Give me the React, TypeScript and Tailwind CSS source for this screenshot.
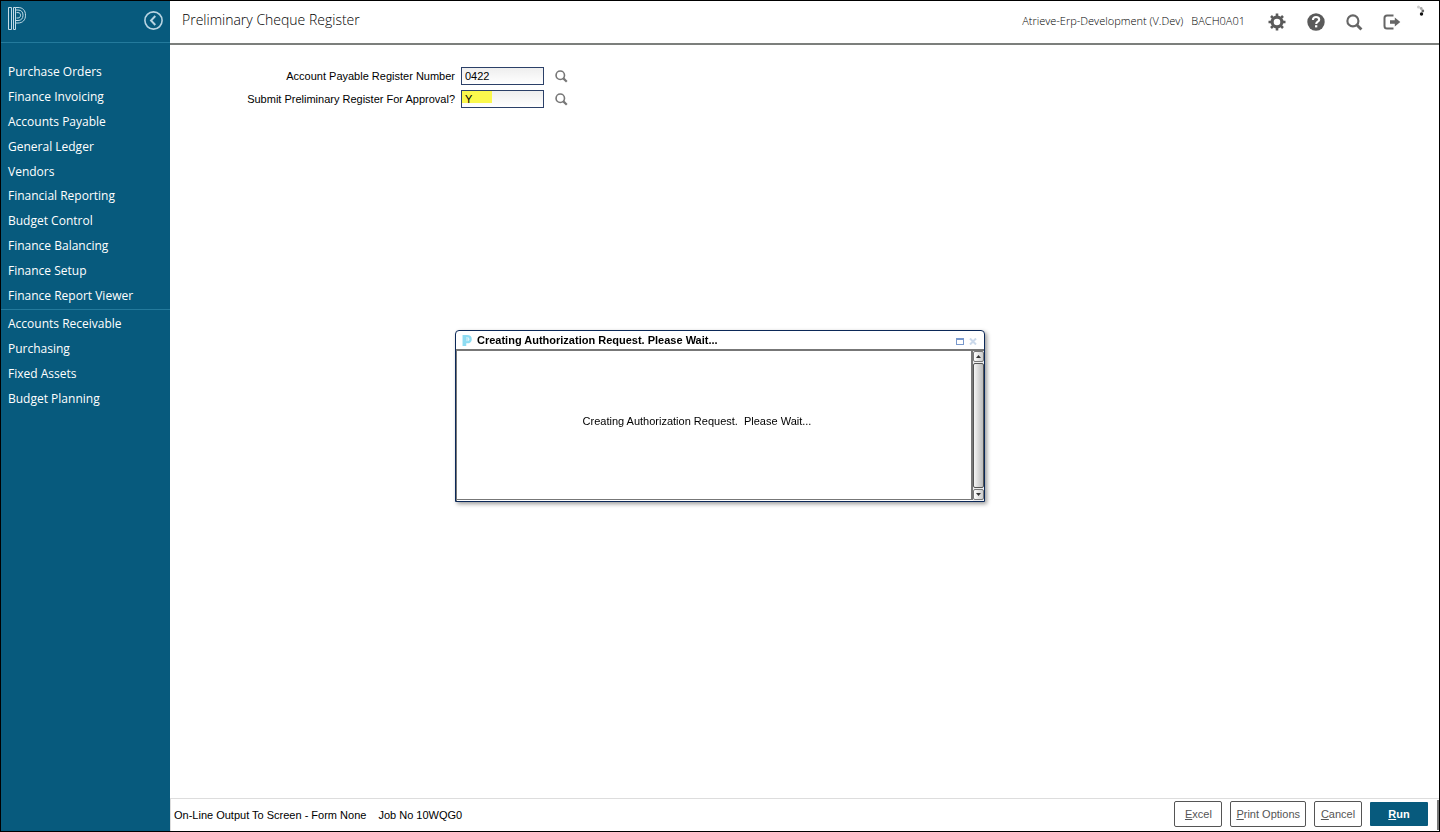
import React from "react";

const mainMenu = [
  "Purchase Orders",
  "Finance Invoicing",
  "Accounts Payable",
  "General Ledger",
  "Vendors",
  "Financial Reporting",
  "Budget Control",
  "Finance Balancing",
  "Finance Setup",
  "Finance Report Viewer",
];

const otherMenu = ["Accounts Receivable", "Purchasing", "Fixed Assets", "Budget Planning"];

function Logo() {
  return (
    <svg width="19" height="24" viewBox="0 0 19 24" fill="none" stroke="#c3dbe6" strokeWidth="1">
      <path d="M.5 .5H3.500V22.500H.5Z" />
      <path d="M5.500 .5H7.500V22.500H5.500Z" />
      <path d="M7.500 .5H10C14.800 .5 17.500 3.500 17.500 8.200S14.800 16 10 16H7.500" />
      <path d="M8 3H10C13.300 3 15 5 15 8.200S13.300 13.500 10 13.500H8" />
      <path d="M8.500 5.600H10C11.700 5.600 12.500 6.700 12.500 8.200S11.700 11 10 11H8.500" />
    </svg>
  );
}

function CollapseIcon() {
  return (
    <svg width="20" height="20" viewBox="0 0 20 20" fill="none" stroke="#b8d4e2" strokeWidth="1.600">
      <circle cx="10.500" cy="10.500" r="8.600" />
      <path d="M12.300 6L8 10.500L12.300 15" strokeWidth="1.900" />
    </svg>
  );
}

function GearIcon() {
  return (
    <svg width="18" height="18" viewBox="0 0 18 18" fill="none" stroke="#5a5a5a">
      <circle cx="9" cy="9" r="4.900" strokeWidth="3.200" />
      <path
        d="M9 .5V3M9 15V17.500M.5 9H3M15 9H17.500M3 3L4.900 4.900M13.100 13.100L15 15M15 3L13.100 4.900M4.900 13.100L3 15"
        strokeWidth="2.600"
      />
    </svg>
  );
}

function HelpIcon() {
  return (
    <svg width="18" height="18" viewBox="0 0 18 18" fill="none">
      <circle cx="9" cy="9" r="8.700" fill="#5a5a5a" />
      <path d="M5.900 7C5.900 5 7.200 4 9 4S12.200 5 12.200 6.700C12.200 8.700 9.200 8.700 9.200 10.900" stroke="#fff" strokeWidth="2.100" />
      <path d="M8 12.200H10.300V14.400H8Z" fill="#fff" />
    </svg>
  );
}

function SearchIcon({ className, color }: { className: string; color: string }) {
  return (
    <svg className={className} viewBox="0 0 16 16" fill="none" stroke={color}>
      <circle cx="6.500" cy="6.500" r="5.200" strokeWidth="2" />
      <path d="M10.300 10.300L14.500 14.500" strokeWidth="2.700" />
    </svg>
  );
}

function LogoutIcon() {
  return (
    <svg width="18" height="16" viewBox="0 0 18 16" fill="none">
      <path d="M10.500 1.500H4Q1.500 1.500 1.500 4V12Q1.500 14.500 4 14.500H10.500" stroke="#666" strokeWidth="2" />
      <path d="M7 6.300H11.800V3.600L17.300 8L11.800 12.400V9.700H7Z" fill="#666" />
    </svg>
  );
}

function Spinner() {
  return (
    <svg width="10" height="12" viewBox="0 0 10 12">
      <circle cx="2.500" cy="2" r="1.500" fill="#ccc" />
      <circle cx="5.200" cy="3.500" r="1.400" fill="#aaa" />
      <circle cx="6.800" cy="6" r="1.400" fill="#666" />
      <circle cx="5.500" cy="9" r="1.700" fill="#111" />
    </svg>
  );
}

function MenuGroup({ items, className }: { items: string[]; className: string }) {
  return (
    <ul className={className}>
      {items.map((item) => (
        <li key={item} className="flex items-center px-2">
          <a href="#" className="whitespace-nowrap">
            {item}
          </a>
        </li>
      ))}
    </ul>
  );
}

function Field({ id, label, value, highlighted }: { id: string; label: string; value: string; highlighted?: boolean }) {
  return (
    <div className="flex items-center">
      <label htmlFor={id} className="w-[286px] pr-[6px] text-right">
        {label}
      </label>
      <input
        id={id}
        defaultValue={value}
        className={
          highlighted
            ? "h-[18px] w-[83px] border border-[#2b4068] bg-[linear-gradient(#fbf84d,#fbf84d),linear-gradient(#eee,#fff)] bg-[length:30px_12px,100%_100%] bg-no-repeat px-[3px]"
            : "h-[18px] w-[83px] border border-[#2b4068] bg-linear-to-b from-[#eee] to-white px-[3px]"
        }
      />
      <button type="button" aria-label={"Look up " + label} className="ml-[11px]">
        <SearchIcon className="size-[13px]" color="#777" />
      </button>
    </div>
  );
}

function FooterButton({ label }: { label: string }) {
  return (
    <button type="button" className="h-[26px] min-w-[48px] rounded-[2px] border border-[#555] bg-white px-[5px] text-[#555]">
      <span className="underline">{label[0]}</span>
      {label.slice(1)}
    </button>
  );
}

function ScrollButton({ up }: { up?: boolean }) {
  return (
    <button
      type="button"
      aria-label={up ? "Scroll up" : "Scroll down"}
      className="flex h-[11px] w-full items-center justify-center rounded-[2px] border border-[#777] bg-linear-to-r from-white to-[#ccc]"
    >
      <svg width="5" height="3" viewBox="0 0 5 3" fill="#333">
        <path d={up ? "M0 3L2.500 0L5 3Z" : "M0 0H5L2.500 3Z"} />
      </svg>
    </button>
  );
}

function WaitDialog() {
  return (
    <section
      role="dialog"
      aria-labelledby="wait-title"
      className="flex h-[172px] w-[530px] flex-col rounded-t-[4px] border border-[#0b2858] bg-white shadow-[2px_2px_4px_rgba(0,0,0,0.4)]"
    >
      <header className="flex h-[18px] items-center pr-[7px] pl-[6px]">
        <svg width="10" height="11" viewBox="0 0 10 11" fill="none" stroke="#8edcf2">
          <path d="M1.500 0V11M3.300 0V11" strokeWidth="1.900" />
          <path d="M3 1.200H5Q8.600 1.200 8.600 4.200T5 7.200H4" strokeWidth="2.300" />
          <path d="M4 4.200H6.500" stroke="#b9e8f6" strokeWidth="4" />
        </svg>
        <h2 id="wait-title" className="ml-[5px] flex-1 font-bold">
          Creating Authorization Request. Please Wait...
        </h2>
        <button type="button" aria-label="Maximize" className="mt-[3px] h-[7px] w-[8px] border border-t-2 border-[#7898cc]" />
        <button type="button" aria-label="Close" className="mt-[3px] ml-[5px]">
          <svg width="8" height="7" viewBox="0 0 8 7" stroke="#cbd9eb" strokeWidth="2">
            <path d="M1 .5L7 6.500M7 .5L1 6.500" />
          </svg>
        </button>
      </header>
      <div className="flex flex-1 border-t-2 border-l border-[#777]">
        <div className="mb-px flex flex-1 justify-center border-r-2 border-b border-[#777] pr-[34px] pt-[63px] whitespace-pre">
          {"Creating Authorization Request.  Please Wait..."}
        </div>
        <div className="flex w-[11px] flex-col gap-px bg-[#eee] pb-px">
          <ScrollButton up />
          <div className="flex-1 rounded-[2px] border border-[#555] bg-linear-to-r from-[#f5f5f5] to-[#bbb]" />
          <ScrollButton />
        </div>
      </div>
    </section>
  );
}

export default function App() {
  return (
    <div className="flex min-h-screen border border-black bg-white font-['Liberation_Sans',Arial,sans-serif] text-[11px] leading-[14px] text-black">
      <aside className="w-[169px] shrink-0 bg-[#075a7d] font-['Open_Sans',sans-serif] text-[12px] leading-[20px] text-white">
        <div className="flex h-[42px] items-start justify-between border-b border-[#247a9c] pt-[6px] pr-[7px] pl-[7px]">
          <Logo />
          <button type="button" aria-label="Collapse menu" className="mt-[3px]">
            <CollapseIcon />
          </button>
        </div>
        <nav aria-label="Modules" className="pt-[17px]">
          <MenuGroup items={mainMenu} className="-ml-px grid h-[248px] auto-rows-fr" />
          <hr className="mt-px mb-[2px] border-[#247a9c]" />
          <MenuGroup items={otherMenu} className="-ml-px grid h-[99px] auto-rows-fr" />
        </nav>
      </aside>
      <div className="flex min-w-0 flex-1 flex-col">
        <header className="flex h-[44px] items-center border-b-2 border-[#7c7f7c] pr-[13px] pl-[12px] font-['Open_Sans',sans-serif]">
          <h1 className="mb-[4px] flex-1 text-[14px] leading-[20px] font-light text-black">Preliminary Cheque Register</h1>
          <span className="mb-[2px] font-light">Atrieve-Erp-Development (V.Dev)</span>
          <span className="mb-[2px] ml-[8px] font-light">BACH0A01</span>
          <button type="button" aria-label="Settings" className="ml-[23px]">
            <GearIcon />
          </button>
          <button type="button" aria-label="Help" className="ml-[21px]">
            <HelpIcon />
          </button>
          <button type="button" aria-label="Search" className="ml-[21px]">
            <SearchIcon className="size-[17px]" color="#666" />
          </button>
          <button type="button" aria-label="Sign out" className="ml-[20px]">
            <LogoutIcon />
          </button>
          <span className="mb-[22px] ml-[15px]">
            <Spinner />
          </span>
        </header>
        <main className="flex-1 pt-[22px] pl-[5px]">
          <form className="flex flex-col gap-[5px]">
            <Field id="register" label="Account Payable Register Number" value="0422" />
            <Field id="approval" label="Submit Preliminary Register For Approval?" value="Y" highlighted />
          </form>
        </main>
        <footer className="flex h-[33px] items-center border-t border-l border-[#ddd] pl-[3px]">
          <p className="flex flex-1 gap-[12px]">
            <span>On-Line Output To Screen - Form None</span>
            <span>Job No 10WQG0</span>
          </p>
          <div className="flex items-center gap-[8px] pr-[9px] pb-[2px]">
            <FooterButton label="Excel" />
            <FooterButton label="Print Options" />
            <FooterButton label="Cancel" />
            <button type="button" className="h-[24px] w-[58px] rounded-[1px] bg-[#075a7d] font-bold text-white">
              <span className="underline">R</span>un
            </button>
          </div>
          <div className="h-[30px] w-[2px] bg-[#777]" />
        </footer>
      </div>
      <div className="pointer-events-none fixed inset-0 flex items-center justify-center">
        <WaitDialog />
      </div>
    </div>
  );
}
